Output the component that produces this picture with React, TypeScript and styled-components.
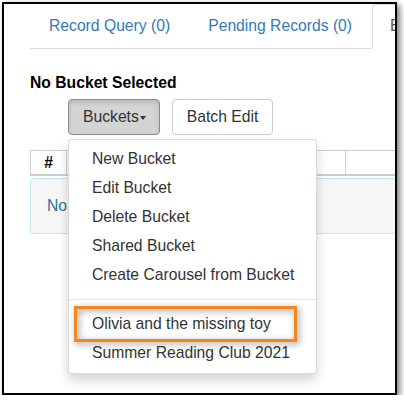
import React from "react";
import styled, { createGlobalStyle, css } from "styled-components";

const GlobalStyle = createGlobalStyle`
  html, body { margin: 0; padding: 0; background: #fff; }
  body { font-family: "Liberation Sans", Arial, sans-serif; }
`;

const Frame = styled.div`
  box-sizing: border-box;
  margin: 2px 0 0 2px;
  width: 395px;
  height: 393px;
  border: 2px solid #000;
  background: #fff;
  overflow: hidden;
  box-shadow: 3px 3px 6px rgba(0, 0, 0, 0.5);
`;

const Page = styled.div`
  padding-left: 26px;
  width: 440px;
  font-size: 15.7px;
  line-height: 22.4px;
  color: #333;
`;

const Nav = styled.ul`
  display: flex;
  margin: 0;
  padding: 0 0 0 1px;
  list-style: none;
  border-bottom: 1px solid #ddd;
`;

const Tab = styled.li<{ $active?: boolean }>`
  margin: 0 2px -1px 0;
  padding: 10px 17px 11px;
  border: 1px solid transparent;
  border-radius: 4px 4px 0 0;
  color: #337ab7;
  white-space: nowrap;
  ${(p) =>
    p.$active &&
    css`
      border-color: #ddd #ddd transparent;
      background: #fff;
      color: #555;
    `}
`;

const Heading = styled.div`
  margin-top: 22.5px;
  font-weight: bold;
  color: #000;
`;

const Toolbar = styled.div`
  display: flex;
  gap: 12px;
  margin: 4.5px 0 0 38px;
`;

const Group = styled.div`
  position: relative;
`;

const Button = styled.button<{ $open?: boolean }>`
  display: inline-flex;
  align-items: center;
  padding: 6px 14px;
  border: 1px solid #ccc;
  border-radius: 4px;
  background: #fff;
  color: #333;
  font: inherit;
  line-height: 22.4px;
  ${(p) =>
    p.$open &&
    css`
      padding-right: 13px;
      background: #d4d4d4;
      border-color: #8c8c8c;
      box-shadow: inset 0 3px 5px rgba(0, 0, 0, 0.125);
    `}
`;

const Caret = styled.span`
  display: inline-block;
  width: 0;
  height: 0;
  margin-left: 1px;
  margin-top: 2px;
  border-top: 4px solid #333;
  border-left: 3.5px solid transparent;
  border-right: 3.5px solid transparent;
`;

const Menu = styled.ul`
  position: absolute;
  top: calc(100% + 4px);
  left: 0;
  z-index: 10;
  box-sizing: border-box;
  width: 249px;
  margin: 0;
  padding: 5px 0;
  list-style: none;
  background: #fff;
  border: 1px solid rgba(0, 0, 0, 0.15);
  border-radius: 4px;
  box-shadow: 0 6px 12px rgba(0, 0, 0, 0.175);
`;

const Item = styled.li`
  position: relative;
  padding: 3.2px 23px;
  color: #333;
  white-space: nowrap;
`;

const Divider = styled.li`
  height: 1px;
  margin: 10px 0;
  background: #e5e5e5;
`;

const Highlight = styled.span`
  position: absolute;
  left: 5px;
  right: 19px;
  top: -4px;
  bottom: -3px;
  border: 3px solid #f7861a;
  filter: drop-shadow(2px 2px 3px rgba(0, 0, 0, 0.45));
`;

const TableHead = styled.div`
  display: flex;
  margin-top: 15px;
  height: 23px;
  border-top: 1px solid #ccc;
  border-bottom: 2px solid #ccc;
`;

const HeadCell = styled.div<{ $w?: number }>`
  box-sizing: border-box;
  ${(p) => (p.$w ? `width: ${p.$w}px;` : "flex: 1;")}
  border-left: 1px solid #ccc;
  font-weight: bold;
  color: #000;
  text-align: center;
  line-height: 23px;
`;

const Alert = styled.div`
  margin-top: 1.5px;
  padding: 16px;
  border: 1px solid #bce8f1;
  border-radius: 4px;
  background: #f7f7f7;
  color: #31708f;
`;

const menuItems = [
  "New Bucket",
  "Edit Bucket",
  "Delete Bucket",
  "Shared Bucket",
  "Create Carousel from Bucket",
];

export default function App() {
  return (
    <>
      <GlobalStyle />
      <Frame>
        <Page>
          <Nav>
            <Tab>Record Query (0)</Tab>
            <Tab>Pending Records (0)</Tab>
            <Tab $active>Bucket View</Tab>
          </Nav>
          <Heading>No Bucket Selected</Heading>
          <Toolbar>
            <Group>
              <Button $open>
                Buckets
                <Caret />
              </Button>
              <Menu>
                {menuItems.map((m) => (
                  <Item key={m}>{m}</Item>
                ))}
                <Divider />
                <Item>
                  Olivia and the missing toy
                  <Highlight />
                </Item>
                <Item>Summer Reading Club 2021</Item>
              </Menu>
            </Group>
            <Button>Batch Edit</Button>
          </Toolbar>
          <TableHead>
            <HeadCell $w={36}>#</HeadCell>
            <HeadCell $w={279} />
            <HeadCell />
          </TableHead>
          <Alert>No Items To Display</Alert>
        </Page>
      </Frame>
    </>
  );
}
